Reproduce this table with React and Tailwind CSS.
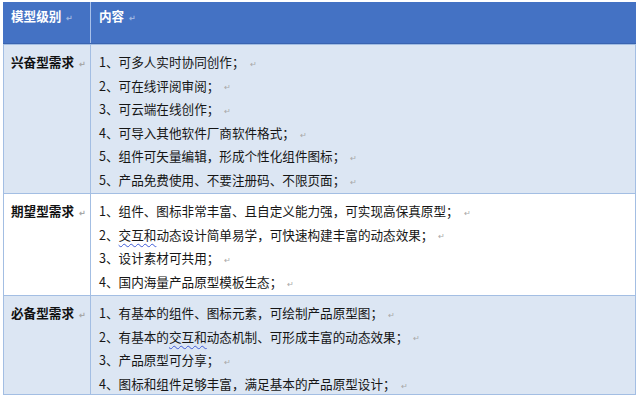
const rows = [
  {
    label: '兴奋型需求',
    bg: 'bg-[#dce6f3]',
    h: 'h-[150px]',
    items: [
      ['1、可多人实时协同创作；'],
      ['2、可在线评阅审阅；'],
      ['3、可云端在线创作；'],
      ['4、可导入其他软件厂商软件格式；'],
      ['5、组件可矢量编辑，形成个性化组件图标；'],
      ['5、产品免费使用、不要注册码、不限页面；'],
    ],
  },
  {
    label: '期望型需求',
    bg: 'bg-white',
    h: 'h-[102px]',
    items: [
      ['1、组件、图标非常丰富、且自定义能力强，可实现高保真原型；'],
      ['2、', '交互和', '动态设计简单易学，可快速构建丰富的动态效果；'],
      ['3、设计素材可共用；'],
      ['4、国内海量产品原型模板生态；'],
    ],
  },
  {
    label: '必备型需求',
    bg: 'bg-[#dce6f3]',
    h: 'h-[99px]',
    items: [
      ['1、有基本的组件、图标元素，可绘制产品原型图；'],
      ['2、有基本的', '交互和', '动态机制、可形成丰富的动态效果；'],
      ['3、产品原型可分享；'],
      ['4、图标和组件足够丰富，满足基本的产品原型设计；'],
    ],
  },
];

// Word 段落标记
function Mark({ light }) {
  return (
    <span className={`ml-[5px] text-[8px] align-middle ${light ? 'text-[#9db5e0]' : 'text-[#a8a8a8]'}`}>↵</span>
  );
}

function Line({ parts }) {
  return (
    <div className="h-[23.6px] leading-[23.6px] whitespace-nowrap">
      {parts.length === 1 ? (
        parts[0]
      ) : (
        <>
          {parts[0]}
          <span className="underline decoration-wavy decoration-[#3f5bd6] decoration-1 underline-offset-[3px]">{parts[1]}</span>
          {parts[2]}
        </>
      )}
      <Mark />
    </div>
  );
}

export default function App() {
  return (
    <div
      className="w-[640px] h-[399px] bg-white pt-[2px] pl-[3px] text-[12.6px] text-[#151515]"
      style={{ fontFamily: '"Noto Sans CJK SC", "Noto Sans", sans-serif' }}
    >
      <div className="w-[633px] flex flex-col">
        {/* 表头 */}
        <div className="flex h-[42px] bg-[#4472c4] border-b border-[#3a64b0] text-white font-bold">
          <div className="w-[88px] pl-[8px] pt-[4px] leading-[20px] border-r border-[#a9c1ea]">
            模型级别<Mark light />
          </div>
          <div className="flex-1 pl-[8px] pt-[4px] leading-[20px]">
            内容<Mark light />
          </div>
        </div>

        {rows.map((row, idx) => (
          <div
            key={row.label}
            className={`flex ${row.h} ${row.bg} border-b border-x border-[#a3bee3] ${idx === 0 ? 'border-t' : ''}`}
          >
            <div className="w-[87px] pl-[7px] pt-[5px] leading-[23.6px] font-bold text-[#111] border-r border-[#a3bee3]">
              {row.label}
              <Mark />
            </div>
            <div className="flex-1 pl-[8px] pt-[5px]">
              {row.items.map((parts, i) => (
                <Line key={i} parts={parts} />
              ))}
            </div>
          </div>
        ))}
      </div>
    </div>
  );
}
